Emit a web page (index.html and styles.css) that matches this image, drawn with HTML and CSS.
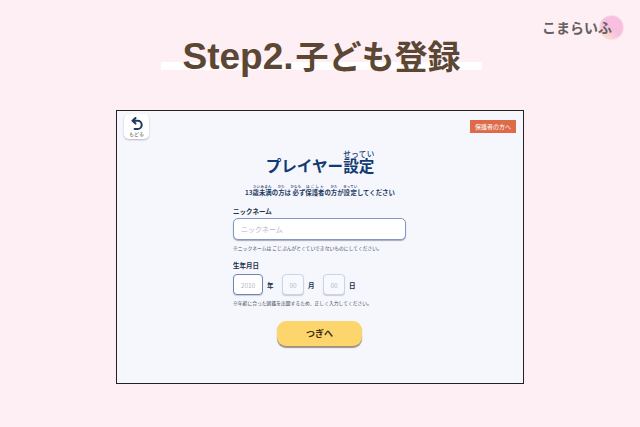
FILE: index.html
```html
<!DOCTYPE html>
<html lang="ja">
<head>
    <meta charset="UTF-8">
    <title>Step2.子ども登録</title>
    <link rel="stylesheet" href="styles.css">
</head>
<body>
    <header class="page-head">
        <div class="logo">
            <span class="logo-circle"></span>
            <span class="logo-text">こまらいふ</span>
        </div>
        <h1 class="step-title"><span class="step-latin">Step2.</span><span class="step-kana">子ども登録</span></h1>
    </header>

    <main class="panel">
        <div class="panel-top">
            <button class="back-btn" type="button">
                <svg class="back-icon" width="12" height="14" viewBox="0 0 12 14">
                    <path d="M4.5 1 L1.5 3.8 L4.5 6.6 M2 3.8 H6.6 A3.9 3.9 0 0 1 6.6 12 H3.6" fill="none" stroke="#1e3a5f" stroke-width="2" stroke-linecap="round" stroke-linejoin="round"/>
                </svg>
                <span class="back-text">もどる</span>
            </button>
            <a class="guardian-link">保護者の方へ</a>
        </div>

        <h2 class="panel-title">プレイヤー<ruby>設定<rt>せってい</rt></ruby></h2>
        <p class="panel-lead">13<ruby>歳未満<rt>さいみまん</rt></ruby>の<ruby>方<rt>かた</rt></ruby>は <ruby>必<rt>かなら</rt></ruby>ず<ruby>保護者<rt>ほごしゃ</rt></ruby>の<ruby>方<rt>かた</rt></ruby>が<ruby>設定<rt>せってい</rt></ruby>してください</p>

        <form class="player-form">
            <label class="field-label">ニックネーム</label>
            <input class="text-input" type="text" placeholder="ニックネーム">
            <p class="note">※ニックネームは ごじぶんがとくていできないものにしてください。</p>

            <label class="field-label birth-label">生年月日</label>
            <div class="birth-row">
                <input class="date-input date-active" type="text" placeholder="2010">
                <span class="date-unit">年</span>
                <input class="date-input" type="text" placeholder="00">
                <span class="date-unit">月</span>
                <input class="date-input" type="text" placeholder="00">
                <span class="date-unit">日</span>
            </div>
            <p class="note">※年齢に合った図鑑を出題するため、正しく入力してください。</p>

            <button class="next-btn" type="button">つぎへ</button>
        </form>
    </main>
</body>
</html>
```

FILE: styles.css
```css
* {
    box-sizing: border-box;
}

body {
    margin: 0;
    width: 640px;
    height: 427px;
    overflow: hidden;
    background-color: #fdeff3;
    font-family: "Noto Sans CJK JP", "Noto Sans", sans-serif;
    color: #1e3a5f;
}

.page-head {
    height: 110px;
    padding-top: 35px;
    position: relative;
}

.logo {
    position: absolute;
    top: 15px;
    right: 16px;
    width: 84px;
    height: 25px;
}

.logo-circle {
    position: absolute;
    top: 0;
    right: 0;
    width: 25px;
    height: 25px;
    border-radius: 50%;
    border: 1px solid #f6dbe6;
    background: linear-gradient(215deg, #f8bfe0 55%, #fbe3c0 90%);
}

.logo-text {
    position: absolute;
    left: 2px;
    top: 2px;
    font-size: 14px;
    line-height: 20px;
    font-weight: 700;
    color: #666060;
    white-space: nowrap;
}

.step-title {
    margin: 0 0 0 161px;
    width: 321px;
    height: 35px;
    display: flex;
    justify-content: center;
    align-items: baseline;
    gap: 2px;
    line-height: 40px;
    font-weight: 700;
    color: #5c4634;
    background: linear-gradient(#ffffff, #ffffff) no-repeat 0 27px / 100% 8px;
    white-space: nowrap;
}

.step-latin {
    font-family: "Liberation Sans", sans-serif;
    font-size: 37px;
}

.step-kana {
    font-size: 33px;
}

.panel {
    margin: 0 0 0 116px;
    width: 408px;
    height: 274px;
    padding: 3px 7px;
    background-color: #f5f7fd;
    border: 1px solid #222;
}

.panel-top {
    display: flex;
    justify-content: space-between;
    align-items: flex-start;
    height: 30px;
}

.back-btn {
    display: flex;
    flex-direction: column;
    align-items: center;
    width: 25px;
    height: 25px;
    padding: 3px 0 0;
    background-color: #fff;
    border: none;
    border-radius: 5px;
    box-shadow: 0 1px 2px rgba(60, 70, 100, 0.35);
}

.back-text {
    font-size: 5px;
    line-height: 6px;
    color: #333;
}

.guardian-link {
    margin-top: 6px;
    width: 46px;
    height: 13px;
    background-color: #dd6b49;
    color: #fff;
    font-size: 6px;
    line-height: 13px;
    text-align: center;
}

.panel-title {
    margin: 0;
    text-align: center;
    font-size: 15.6px;
    line-height: 23px;
    font-weight: 700;
    color: #123a73;
    padding-top: 10px;
}

.panel-title rt {
    font-size: 7.5px;
    line-height: 1;
    font-weight: 500;
}

.panel-lead {
    margin: 7px 0 0;
    text-align: center;
    font-size: 6.4px;
    line-height: 10px;
    font-weight: 700;
    color: #1e3a5f;
}

.panel-lead rt {
    font-size: 3.5px;
    line-height: 1;
    font-weight: 500;
}

.player-form {
    width: 173px;
    margin: 9px 0 0 109px;
}

.field-label {
    display: block;
    font-size: 6.5px;
    line-height: 9px;
    font-weight: 700;
    color: #222f45;
}

.text-input {
    display: block;
    width: 173px;
    height: 22px;
    margin-top: 2px;
    padding: 0 7px;
    font-family: inherit;
    font-size: 7px;
    background-color: #fff;
    border: 1px solid #8298c4;
    border-radius: 5px;
    box-shadow: 0 1px 1px rgba(50, 60, 90, 0.4);
}

input::placeholder {
    color: #b5b9c2;
}

.note {
    margin: 4px 0 0;
    font-size: 4.8px;
    line-height: 8px;
    color: #3d4a60;
    white-space: nowrap;
}

.birth-label {
    margin-top: 9px;
}

.birth-row {
    display: flex;
    align-items: center;
    height: 21px;
    margin: 4px 0 1px;
}

.date-input {
    width: 22px;
    height: 21px;
    padding: 0;
    text-align: center;
    font-family: inherit;
    font-size: 6.5px;
    background-color: #f8f9fe;
    border: 1px solid #ccd5e8;
    border-radius: 4px;
    box-shadow: 0 1px 1px rgba(70, 80, 110, 0.25);
}

.date-active {
    width: 30px;
    background-color: #fff;
    border-color: #6f86b4;
}

.date-unit {
    width: 19px;
    padding-left: 4px;
    font-size: 6.5px;
    font-weight: 700;
    color: #222f45;
}

.next-btn {
    display: block;
    width: 85px;
    height: 25px;
    margin: 14px 0 0 44px;
    font-family: inherit;
    font-size: 9px;
    font-weight: 700;
    color: #3a2c10;
    background-color: #fcd56c;
    border: none;
    border-radius: 9px;
    box-shadow: 0 2px 1px rgba(110, 90, 60, 0.65);
}
```
